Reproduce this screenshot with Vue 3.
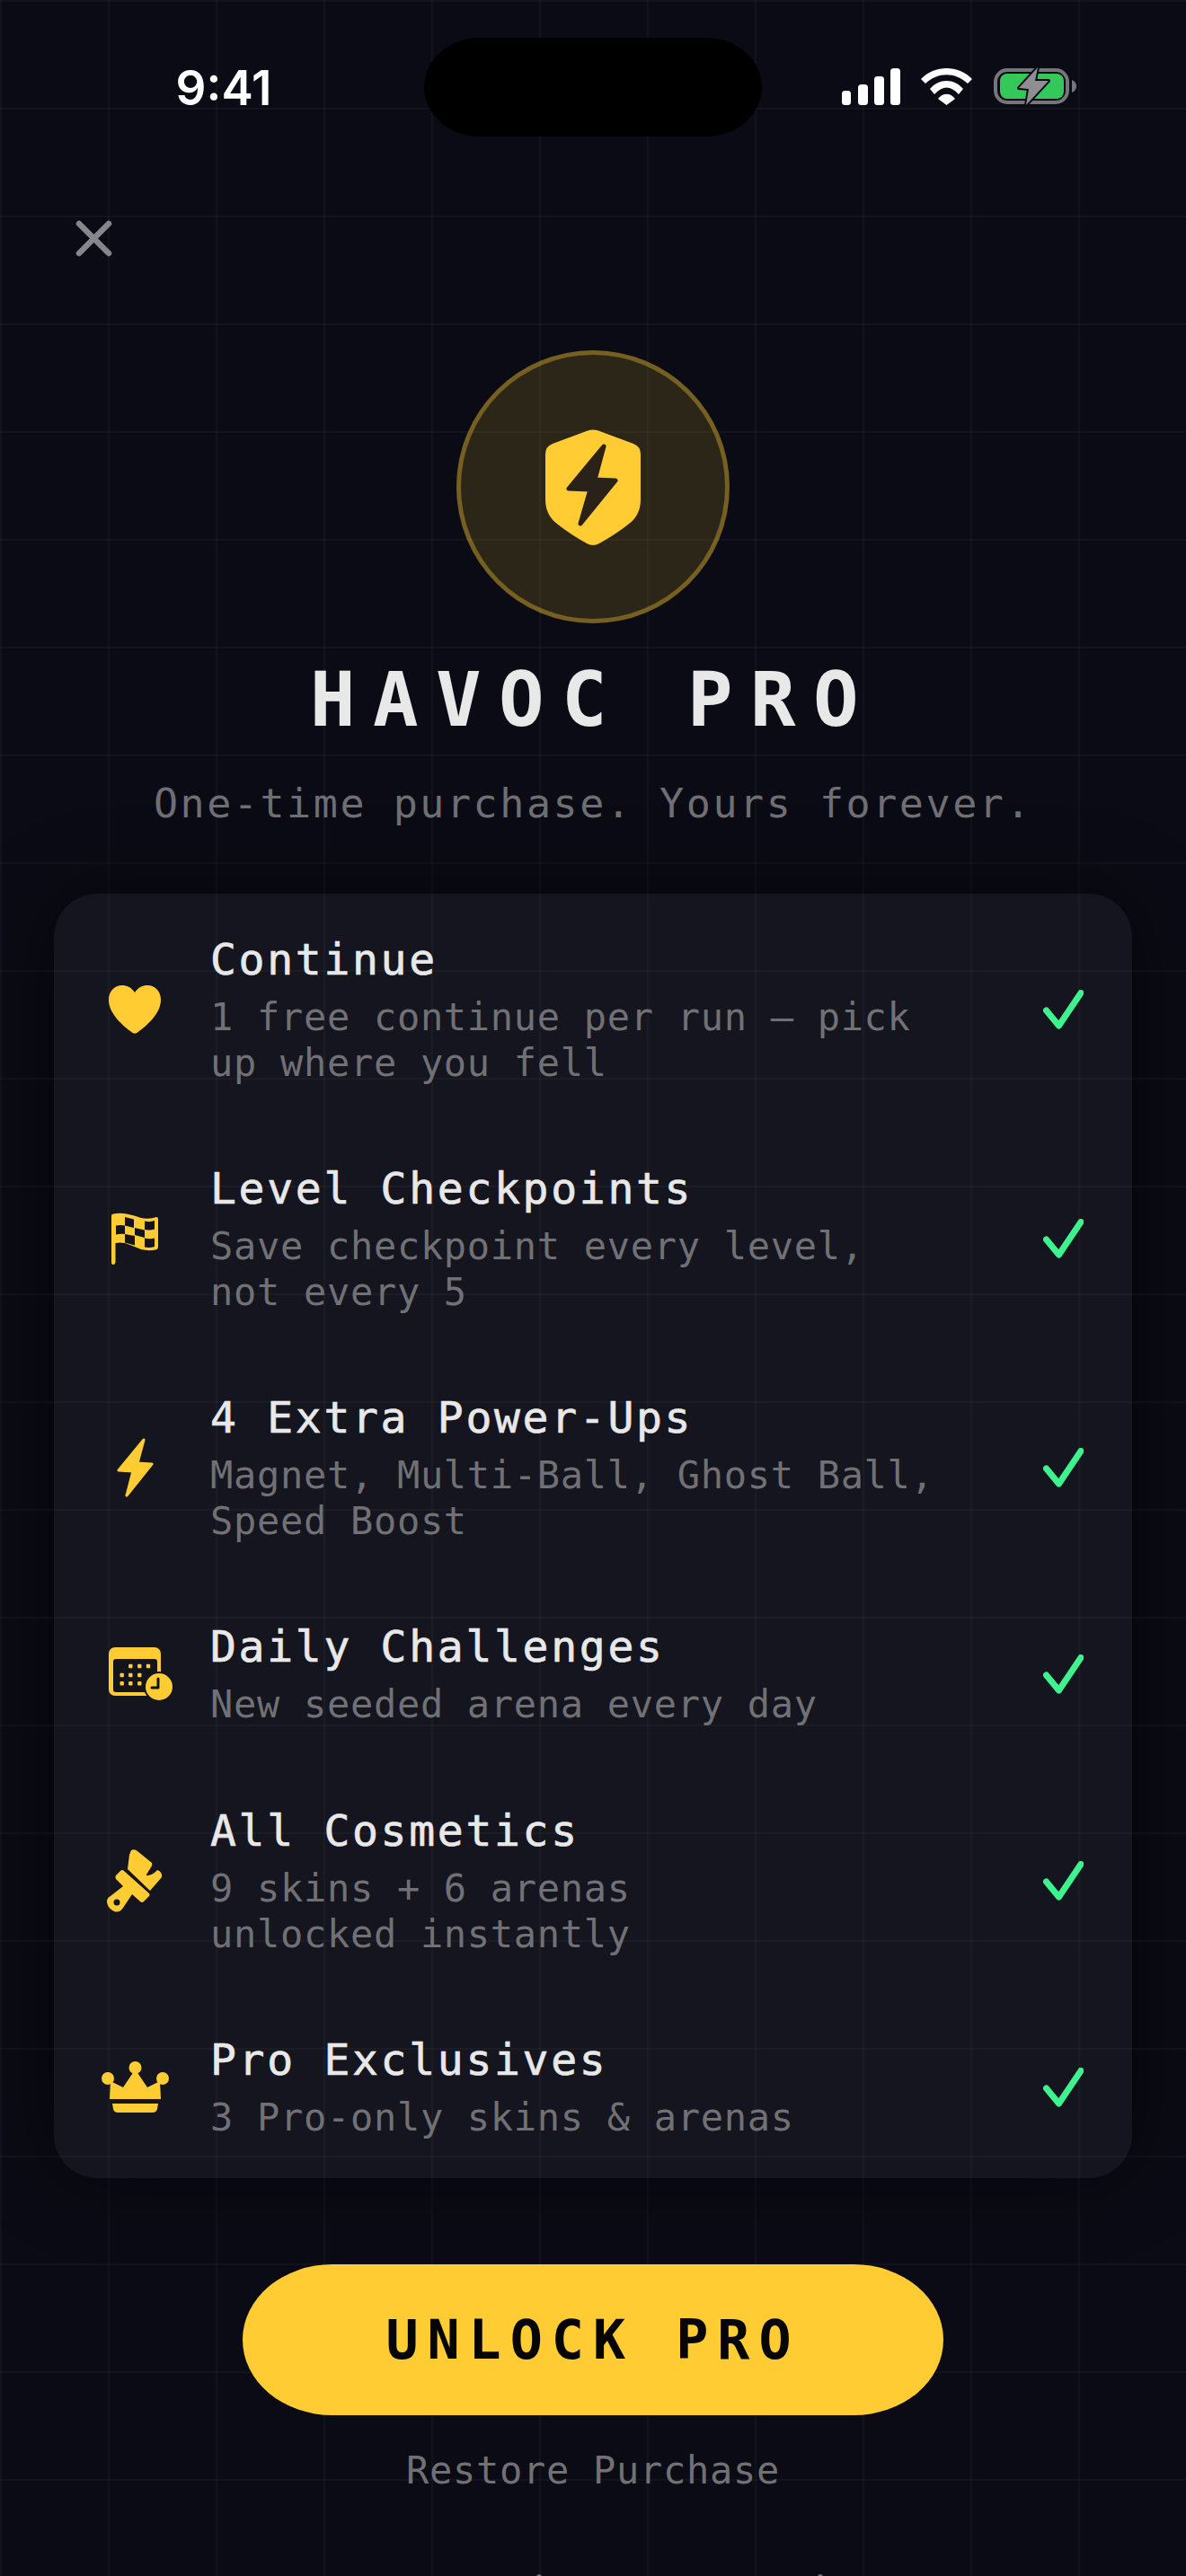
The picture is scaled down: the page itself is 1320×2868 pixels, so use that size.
<script setup>
const features = [
  { icon: 'heart', title: 'Continue', desc: '1 free continue per run — pick\nup where you fell' },
  { icon: 'flag', title: 'Level Checkpoints', desc: 'Save checkpoint every level,\nnot every 5' },
  { icon: 'bolt', title: '4 Extra Power-Ups', desc: 'Magnet, Multi-Ball, Ghost Ball,\nSpeed Boost' },
  { icon: 'calendar', title: 'Daily Challenges', desc: 'New seeded arena every day' },
  { icon: 'brush', title: 'All Cosmetics', desc: '9 skins + 6 arenas\nunlocked instantly' },
  { icon: 'crown', title: 'Pro Exclusives', desc: '3 Pro-only skins & arenas' }
]

const calendarDots = [
  [24.3, 21], [34.3, 21], [44, 21],
  [14.7, 31], [24.3, 31], [34.3, 31],
  [14.7, 40.3], [24.3, 40.3], [34.3, 40.3]
]
</script>

<template>
  <div class="screen">
    <div class="status-bar">
      <div class="status-left"><span class="time">9:41</span></div>
      <div class="island"></div>
      <div class="status-right">
        <svg class="signal" width="65" height="41" viewBox="0 0 65 41">
          <rect x="0" y="25" width="10" height="16" rx="3.5" fill="#fff" />
          <rect x="18" y="18" width="11" height="23" rx="3.5" fill="#fff" />
          <rect x="36" y="9" width="11" height="32" rx="3.5" fill="#fff" />
          <rect x="54" y="0" width="11" height="41" rx="3.5" fill="#fff" />
        </svg>
        <svg class="wifi" width="57" height="41" viewBox="0 0 57 41">
          <path d="M0 12C15 -4 42 -4 57 12L52 17C38 4 19 4 5 17Z" fill="#fff" />
          <path d="M10 23C20 11 37 11 47 23L42 29C33 19 24 19 15 29Z" fill="#fff" />
          <path d="M19 34C24 27 33 27 38 34L28.5 41Z" fill="#fff" />
        </svg>
        <svg class="battery" width="92" height="44" viewBox="0 0 92 44">
          <rect x="2" y="4" width="80" height="36" rx="13" fill="none" stroke="#76767a" stroke-width="4" />
          <rect x="7" y="8" width="71" height="28" rx="8" fill="#34c759" />
          <path d="M87 15Q92 17 92 22Q92 27 87 29Z" fill="#76767a" />
          <path d="M49 1L28 24L39 25L36 43L61 16L46 16Z" fill="#8e8e93" stroke="#0a0b14" stroke-width="4" stroke-linejoin="round" paint-order="stroke" />
        </svg>
      </div>
    </div>

    <div class="close-row">
      <svg width="41" height="41" viewBox="0 0 41 41">
        <path d="M4 4L37 37M37 4L4 37" stroke="#86868b" stroke-width="6.5" stroke-linecap="round" />
      </svg>
    </div>

    <div class="hero">
      <div class="badge">
        <svg width="106" height="129" viewBox="0 0 106 129">
          <path d="M47 1.5Q53 -0.5 59 1.5L98 16Q106 19 106 28L106 78Q106 96 92 106Q78 117 60 127Q53 131 46 127Q28 117 14 106Q0 96 0 78L0 28Q0 19 8 16Z" fill="#ffcc33" />
          <path d="M65 19L26 66L50 67L39 105L78 57L55 56Z" fill="#2a2219" stroke="#2a2219" stroke-width="5" stroke-linejoin="round" />
        </svg>
      </div>
      <h1 class="title">HAVOC PRO</h1>
      <p class="subtitle">One-time purchase. Yours forever.</p>
    </div>

    <div class="card">
      <div class="row" v-for="item in features" :key="item.title">
        <div class="row-icon">
          <svg v-if="item.icon === 'heart'" width="58" height="54" viewBox="0 0 58 54">
            <path d="M29 8C25 2 20 0 15 0C6 0 0 7 0 16C0 32 16 45 26 52.5C28 54 30 54 32 52.5C42 45 58 32 58 16C58 7 52 0 43 0C38 0 33 2 29 8Z" fill="#ffcc33" />
          </svg>
          <svg v-else-if="item.icon === 'flag'" width="52" height="58" viewBox="0 0 52 58">
            <path d="M0 3Q0 2 2 1.5Q9 0 17 1.5Q26 3 33 6Q42 8 50 5Q52 5 52 7L52 38Q52 41 49 41.5Q41 43 33 41Q24 37 15 34Q9 33 4.5 34L4.5 55Q4 58 2 58Q0 58 0 55Z" fill="#ffcc33" />
            <path d="M15 5L25 7.5L25 17L15 14.5ZM37 9.5Q43 11 48 9L48 18.5Q43 20 37 19ZM5 14.5Q10 13.5 15 14.5L15 24Q10 23.5 5 24.5ZM26 17L37 19.5L37 28L26 25ZM15 24L26 26L26 36.5L15 33.5ZM37 28.5Q43 30 48 28.5L48 38Q43 39.5 37 38.5Z" fill="#14151c" />
          </svg>
          <svg v-else-if="item.icon === 'bolt'" width="41" height="66" viewBox="0 0 41 66">
            <path d="M30 2L2 36L18 37L11 64L39 29L23 28Z" fill="#ffcc33" stroke="#ffcc33" stroke-width="3" stroke-linejoin="round" />
          </svg>
          <svg v-else-if="item.icon === 'calendar'" class="calendar" width="71" height="59" viewBox="0 0 71 59">
            <rect x="0" y="0" width="58" height="54" rx="7" fill="#ffcc33" />
            <rect x="5" y="13" width="49" height="37" rx="3" fill="#14151c" />
            <rect v-for="dot in calendarDots" :key="dot.join()" :x="dot[0] - 2.2" :y="dot[1] - 2.2" width="4.4" height="4.4" rx="1" fill="#ffcc33" />
            <circle cx="56" cy="44" r="17" fill="#14151c" />
            <circle cx="56" cy="44" r="15" fill="#ffcc33" />
            <path d="M55 35L55 45L48 45" fill="none" stroke="#14151c" stroke-width="3" stroke-linecap="round" stroke-linejoin="round" />
          </svg>
          <svg v-else-if="item.icon === 'brush'" width="62" height="70" viewBox="0 0 62 70">
            <path d="M27 1Q31 -1 34 2L50 15Q51 17 49 20L44 28Q44 30 46 29Q52 28 56 23Q62 25 61 31L48 46L23 22L25 6Z" fill="#ffcc33" />
            <path fill-rule="evenodd" d="M10 29L15 24Q17 22 19 24L47 49Q48 51 47 52L41 58Q39 60 37 58L28 50L18 65Q14 71 8 69Q0 65 0 58Q0 54 4 52L18 41L10 33Q9 31 10 29ZM11 55.5A3.5 3.5 0 1 0 11 62.5A3.5 3.5 0 1 0 11 55.5Z" fill="#ffcc33" />
          </svg>
          <svg v-else width="75" height="57" viewBox="0 0 75 57">
            <circle cx="37.5" cy="7" r="7" fill="#ffcc33" />
            <circle cx="7" cy="19" r="7" fill="#ffcc33" />
            <circle cx="68" cy="19" r="7" fill="#ffcc33" />
            <path d="M10 22L24 29L37.5 9L51 29L65 22L66 42L9 42Z" fill="#ffcc33" />
            <path d="M12 47L63 47L62 53Q61 57 57 57L18 57Q14 57 13 53Z" fill="#ffcc33" />
          </svg>
        </div>
        <div class="row-text">
          <div class="row-title">{{ item.title }}</div>
          <div class="row-desc">{{ item.desc }}</div>
        </div>
        <svg class="check" width="45" height="44" viewBox="0 0 45 44">
          <path d="M3.5 23L17.5 40L42 3.5" fill="none" stroke="#3ef28e" stroke-width="7" stroke-linecap="round" stroke-linejoin="round" />
        </svg>
      </div>
    </div>

    <button class="unlock">UNLOCK PRO</button>
    <div class="restore">Restore Purchase</div>

    <span class="clip-dot clip-dot-left"></span>
    <span class="clip-dot clip-dot-right"></span>
  </div>
</template>

<style scoped>
.screen {
  position: relative;
  width: 1320px;
  height: 2868px;
  overflow: hidden;
  background-color: #0a0b14;
  background-image:
    linear-gradient(rgba(255, 255, 255, 0.03) 2px, transparent 2px),
    linear-gradient(90deg, rgba(255, 255, 255, 0.03) 2px, transparent 2px);
  background-size: 120px 120px;
  font-family: "DejaVu Sans Mono", "Liberation Mono", monospace;
}
.status-bar {
  display: flex;
  height: 152px;
}
.status-left {
  flex: none;
  width: 472px;
  box-sizing: border-box;
  display: flex;
  justify-content: center;
  padding-left: 26px;
  padding-top: 66px;
}
.time {
  font-family: Inter, "Liberation Sans", sans-serif;
  font-weight: 600;
  font-size: 53px;
  line-height: 64px;
  color: #fff;
}
.island {
  flex: none;
  width: 376px;
  height: 110px;
  margin-top: 42px;
  border-radius: 62px / 55px;
  background: #000;
}
.status-right {
  flex: none;
  width: 472px;
  box-sizing: border-box;
  display: flex;
  align-items: flex-start;
  padding-left: 89px;
  padding-top: 74px;
}
.signal {
  margin-top: 2px;
}
.wifi {
  margin-top: 2px;
  margin-left: 23px;
}
.battery {
  margin-left: 24px;
}
.close-row {
  display: flex;
  padding-left: 84px;
  margin-top: 93px;
}
.hero {
  display: flex;
  flex-direction: column;
  align-items: center;
  margin-top: 104px;
}
.badge {
  width: 304px;
  height: 304px;
  box-sizing: border-box;
  display: flex;
  align-items: center;
  justify-content: center;
  border-radius: 50%;
  background: rgba(255, 204, 51, 0.14);
  border: 5px solid rgba(255, 204, 51, 0.35);
}
.title {
  margin: 35px 0 0;
  font-size: 84px;
  line-height: 100px;
  font-weight: 700;
  letter-spacing: 19.4px;
  color: #e8e8e8;
}
.subtitle {
  margin: 36px 0 0;
  font-size: 45px;
  line-height: 60px;
  letter-spacing: 2.55px;
  color: #6e6e73;
}
.card {
  margin: 70px 60px 0;
  border-radius: 48px;
  background: rgba(255, 255, 255, 0.045);
  box-shadow: 0 0 90px rgba(0, 0, 0, 0.45);
}
.row {
  display: flex;
  align-items: center;
  box-sizing: border-box;
  min-height: 205px;
  padding: 43px 54px 41px 60px;
}
.row-icon {
  flex: none;
  width: 60px;
  display: flex;
  justify-content: center;
}
.row-icon svg {
  flex: none;
}
.row-icon .calendar {
  transform: translateX(6px);
}
.row-text {
  flex: 1;
  align-self: flex-start;
  margin-left: 54px;
}
.row-title {
  font-size: 48px;
  line-height: 60px;
  letter-spacing: 2.7px;
  -webkit-text-stroke: 0.7px #e8e8e8;
  color: #e8e8e8;
}
.row-desc {
  margin-top: 9px;
  font-size: 42px;
  line-height: 51px;
  letter-spacing: 0.7px;
  white-space: pre-line;
  color: #707075;
}
.check {
  flex: none;
}
.unlock {
  display: block;
  width: 780px;
  height: 168px;
  margin: 96px auto 0;
  padding: 0;
  border: none;
  border-radius: 100px / 84px;
  background: #ffcc33;
  font-family: inherit;
  font-size: 60px;
  font-weight: 700;
  letter-spacing: 10px;
  color: #050505;
}
.restore {
  margin-top: 36px;
  text-align: center;
  font-size: 42px;
  line-height: 51px;
  letter-spacing: 0.7px;
  color: #707075;
}
.clip-dot {
  position: absolute;
  top: 2866px;
  width: 6px;
  height: 6px;
  border-radius: 50%;
  background: #6e6e73;
}
.clip-dot-left {
  left: 597px;
}
.clip-dot-right {
  left: 910px;
}
</style>
